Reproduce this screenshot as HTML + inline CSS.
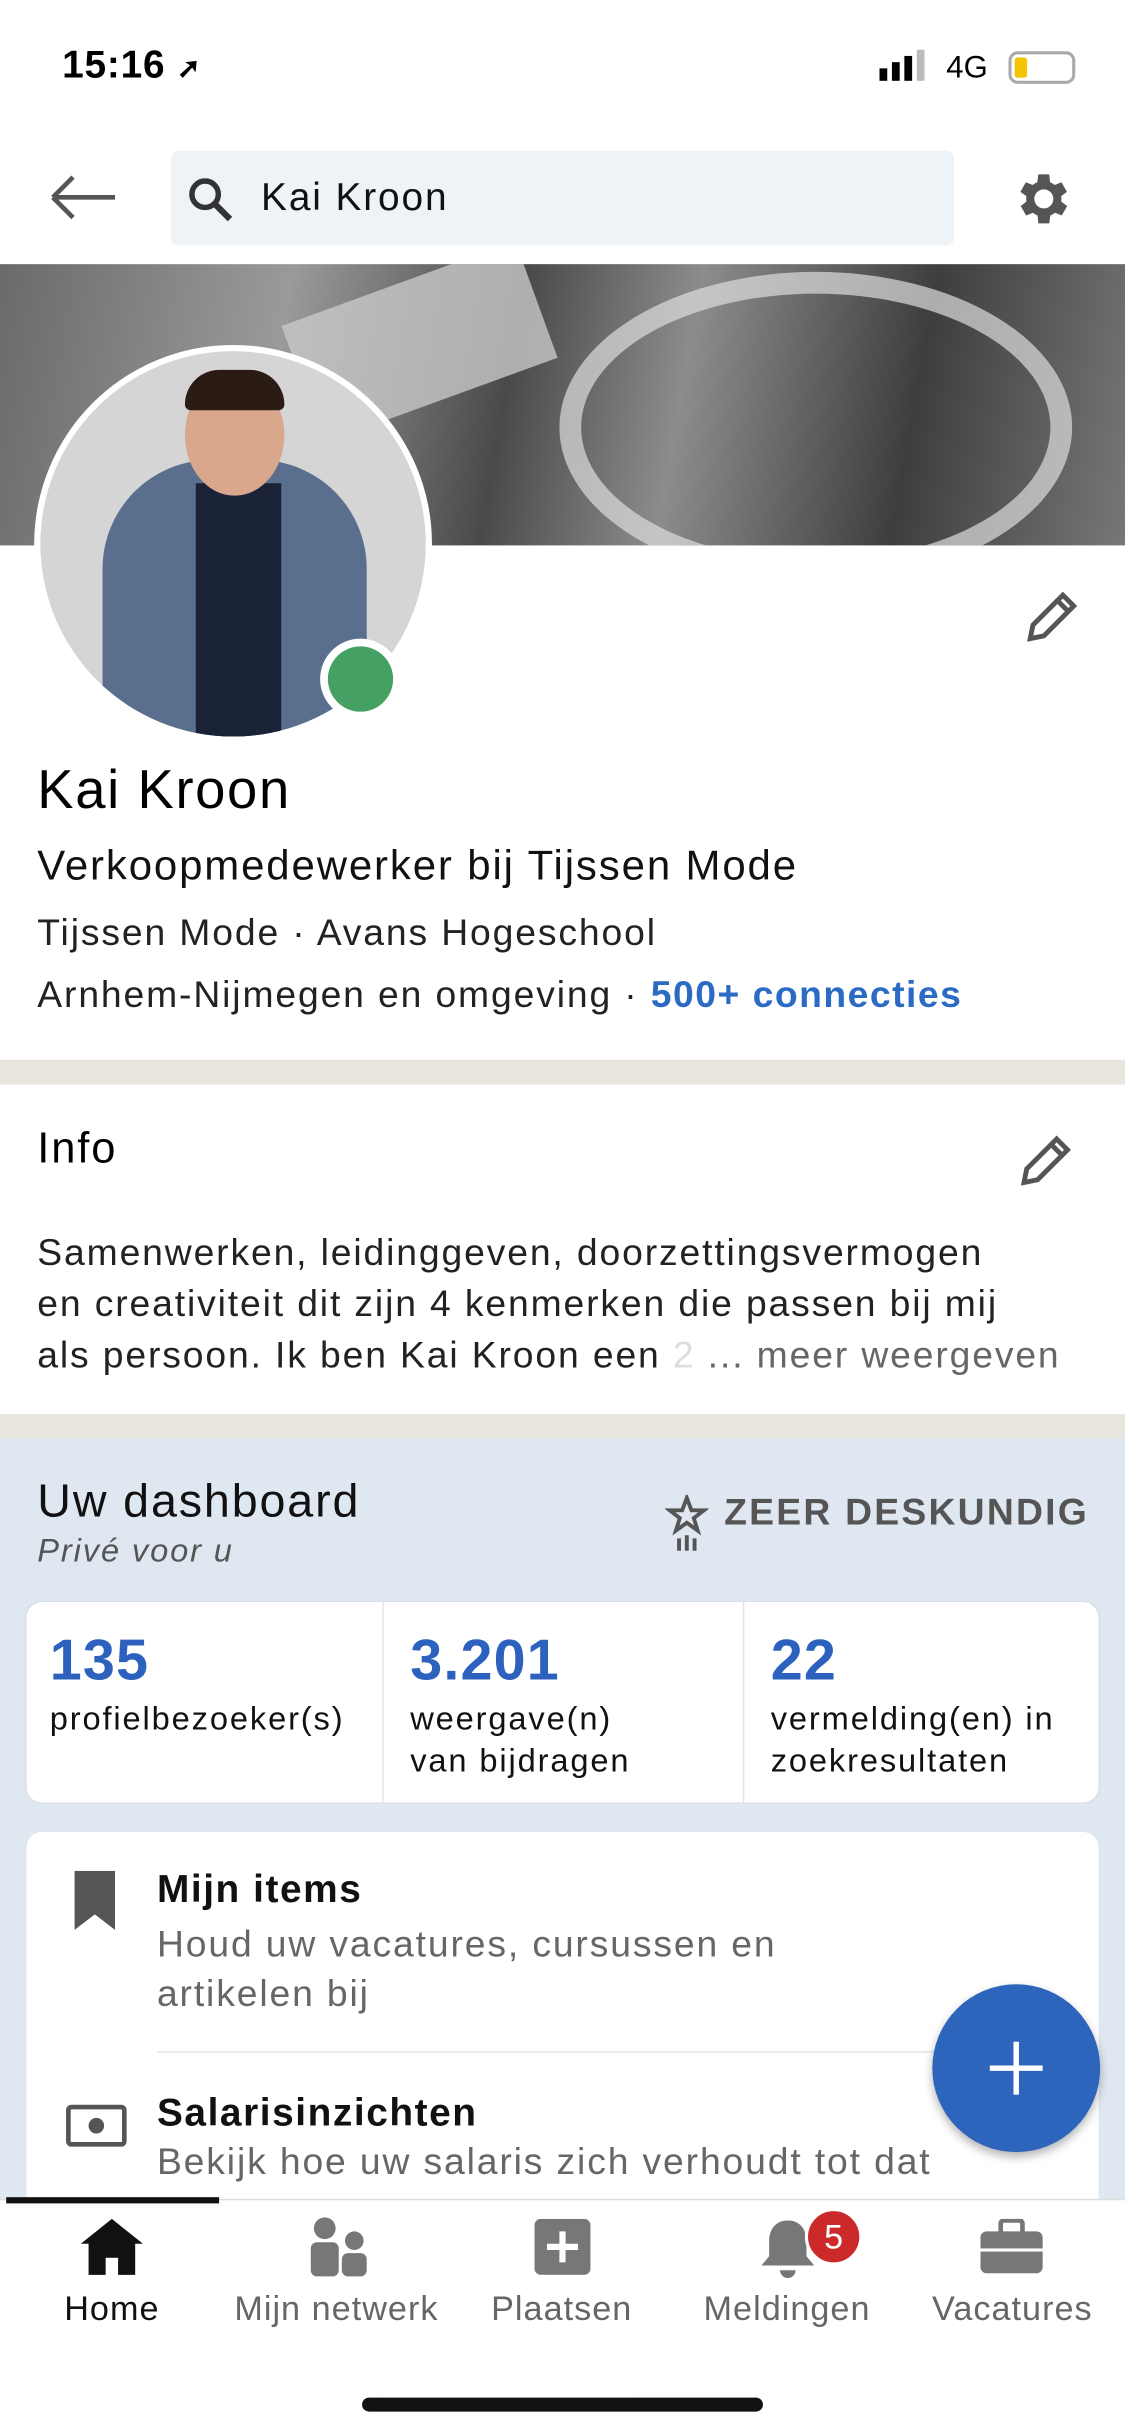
<!DOCTYPE html>
<html><head><meta charset="utf-8"><style>
*{margin:0;padding:0;box-sizing:border-box}
html,body{width:1125px;height:2436px;overflow:hidden;background:#fff}
#w{width:724px;height:1568px;transform:scale(1.55387);transform-origin:0 0;position:relative;font-family:"Liberation Sans",sans-serif;color:#000;background:#fff;letter-spacing:.075em}
.a{position:absolute}
.t{white-space:nowrap}
</style></head><body><div id="w">
<div class="a t" style="left:40px;top:28px;font-size:25px;font-weight:bold;letter-spacing:.02em">15:16 <span style="font-size:18px">➚</span></div>
<div class="a" style="left:566px;top:44px;width:5px;height:8px;background:#000"></div>
<div class="a" style="left:574px;top:40px;width:5px;height:12px;background:#000"></div>
<div class="a" style="left:582px;top:36px;width:5px;height:16px;background:#000"></div>
<div class="a" style="left:590px;top:32px;width:5px;height:20px;background:#bbb"></div>
<div class="a t" style="left:609px;top:33px;font-size:20px;letter-spacing:0">4G</div>
<div class="a" style="left:649px;top:33px;width:43px;height:21px;border:2px solid #aaa;border-radius:6px"><div style="margin:2px;width:8px;height:13px;background:#f5c400;border-radius:2px"></div></div>
<svg class="a" style="left:30px;top:110px" width="46" height="34"><path d="M4 17H44M4 17L17 4M4 17L17 30" stroke="#555" stroke-width="3" fill="none"/></svg>
<div class="a" style="left:110px;top:97px;width:504px;height:61px;background:#eef3f8;border-radius:5px"></div>
<svg class="a" style="left:120px;top:113px" width="32" height="32"><circle cx="12" cy="12" r="8.5" stroke="#333" stroke-width="3.5" fill="none"/><path d="M18 18L28 28" stroke="#333" stroke-width="4"/></svg>
<div class="a t" style="left:168px;top:113px;font-size:25px;color:#111">Kai Kroon</div>
<svg class="a" style="left:649px;top:107px" width="42" height="42" viewBox="0 0 24 24"><path fill="#555" d="M19.4 13a7.5 7.5 0 000-2l2.1-1.6-2-3.5-2.5 1a7 7 0 00-1.7-1L15 3h-4l-.4 2.9a7 7 0 00-1.7 1l-2.5-1-2 3.5L6.6 11a7.5 7.5 0 000 2l-2.1 1.6 2 3.5 2.5-1a7 7 0 001.7 1L11 21h4l.4-2.9a7 7 0 001.7-1l2.5 1 2-3.5zM13 15.5a3.5 3.5 0 110-7 3.5 3.5 0 010 7z"/></svg>
<div class="a" style="left:0;top:170px;width:724px;height:181px;overflow:hidden;background:linear-gradient(100deg,#6a6a6a,#9a9a9a 25%,#4a4a4a 45%,#8c8c8c 60%,#3e3e3e 80%,#777)">
<div class="a" style="left:360px;top:5px;width:330px;height:200px;border:14px solid #ddd;border-radius:50%;opacity:.7"></div>
<div class="a" style="left:190px;top:10px;width:160px;height:80px;background:#c8c8c8;transform:rotate(-20deg);opacity:.8"></div>
</div>
<div class="a" style="left:22px;top:222px;width:256px;height:256px;border-radius:50%;background:#fff"></div>
<div class="a" style="left:26px;top:226px;width:248px;height:248px;border-radius:50%;overflow:hidden;background:#d5d5d5">
<div class="a" style="left:40px;top:70px;width:170px;height:200px;border-radius:70px 70px 0 0;background:#5a6f8e"></div>
<div class="a" style="left:100px;top:85px;width:55px;height:180px;background:#1a2238"></div>
<div class="a" style="left:93px;top:15px;width:64px;height:78px;border-radius:50%;background:#d9a88c"></div>
<div class="a" style="left:93px;top:12px;width:64px;height:26px;border-radius:30px 30px 5px 5px;background:#2a1c14"></div>
</div>
<div class="a" style="left:206px;top:411px;width:52px;height:52px;border-radius:50%;background:#fff"></div>
<div class="a" style="left:211px;top:416px;width:42px;height:42px;border-radius:50%;background:#45a163"></div>
<svg class="a" style="left:656px;top:376px" width="42" height="42" viewBox="0 0 24 24"><path d="M4 20l1-5L16 4l4 4L9 19zM14 6l4 4" stroke="#555" stroke-width="1.8" fill="none"/></svg>
<div class="a t" style="left:24px;top:489px;font-size:35px;letter-spacing:.03em">Kai Kroon</div>
<div class="a t" style="left:24px;top:542px;font-size:27px;color:#111">Verkoopmedewerker bij Tijssen Mode</div>
<div class="a t" style="left:24px;top:587px;font-size:24px;color:#222">Tijssen Mode · Avans Hogeschool</div>
<div class="a t" style="left:24px;top:627px;font-size:24px;color:#222">Arnhem-Nijmegen en omgeving · <b style="color:#2c6bc4;letter-spacing:.04em">500+ connecties</b></div>
<div class="a" style="left:0;top:682px;width:724px;height:16px;background:#e9e6e0"></div>
<div class="a t" style="left:24px;top:723px;font-size:28px">Info</div>
<svg class="a" style="left:652px;top:726px" width="42" height="42" viewBox="0 0 24 24"><path d="M4 20l1-5L16 4l4 4L9 19zM14 6l4 4" stroke="#555" stroke-width="1.8" fill="none"/></svg>
<div class="a t" style="left:24px;top:790px;font-size:24px;line-height:33px;color:#222">Samenwerken, leidinggeven, doorzettingsvermogen<br>en creativiteit dit zijn 4 kenmerken die passen bij mij<br>als persoon. Ik ben Kai Kroon een <span style="color:#ddd">2</span> <span style="color:#666">... meer weergeven</span></div>
<div class="a" style="left:0;top:910px;width:724px;height:16px;background:#e9e6e0"></div>
<div class="a" style="left:0;top:926px;width:724px;height:490px;background:#dfe7f0"></div>
<div class="a t" style="left:24px;top:950px;font-size:30px;color:#111;letter-spacing:.04em">Uw dashboard</div>
<div class="a t" style="left:24px;top:987px;font-size:21px;color:#555;font-style:italic">Privé voor u</div>
<svg class="a" style="left:428px;top:962px" width="28" height="40" viewBox="0 0 28 40"><path d="M14 2l3 8h8l-6.5 5 2.5 8-7-5-7 5 2.5-8L3 10h8z" stroke="#555" stroke-width="2.5" fill="none"/><path d="M9 28v8M14 26v10M19 28v8" stroke="#555" stroke-width="2.5"/></svg>
<div class="a t" style="left:466px;top:960px;font-size:24px;font-weight:bold;color:#555;letter-spacing:.06em">ZEER DESKUNDIG</div>
<div class="a" style="left:17px;top:1031px;width:690px;height:129px;background:#fff;border-radius:10px;box-shadow:0 0 1px #ccc"></div>
<div class="a" style="left:246px;top:1031px;width:1px;height:129px;background:#e5e5e5"></div>
<div class="a" style="left:478px;top:1031px;width:1px;height:129px;background:#e5e5e5"></div>
<div class="a t" style="left:32px;top:1048px;font-size:37px;font-weight:bold;color:#2c62bd;letter-spacing:.02em">135</div>
<div class="a t" style="left:264px;top:1048px;font-size:37px;font-weight:bold;color:#2c62bd;letter-spacing:.02em">3.201</div>
<div class="a t" style="left:496px;top:1048px;font-size:37px;font-weight:bold;color:#2c62bd;letter-spacing:.02em">22</div>
<div class="a t" style="left:32px;top:1093px;font-size:21px;line-height:27px;color:#111">profielbezoeker(s)</div>
<div class="a t" style="left:264px;top:1093px;font-size:21px;line-height:27px;color:#111">weergave(n)<br>van bijdragen</div>
<div class="a t" style="left:496px;top:1093px;font-size:21px;line-height:27px;color:#111">vermelding(en) in<br>zoekresultaten</div>
<div class="a" style="left:17px;top:1179px;width:690px;height:260px;background:#fff;border-radius:10px"></div>
<svg class="a" style="left:46px;top:1204px" width="30" height="40"><path d="M2 0h26v38L15 28 2 38z" fill="#555"/></svg>
<div class="a t" style="left:101px;top:1202px;font-size:25px;font-weight:bold;color:#111;letter-spacing:.04em">Mijn items</div>
<div class="a t" style="left:101px;top:1236px;font-size:24px;line-height:32px;color:#666">Houd uw vacatures, cursussen en<br>artikelen bij</div>
<div class="a" style="left:101px;top:1320px;width:606px;height:1px;background:#e5e5e5"></div>
<svg class="a" style="left:42px;top:1354px" width="40" height="28"><rect x="2" y="2" width="36" height="24" rx="2" stroke="#555" stroke-width="3" fill="none"/><circle cx="20" cy="14" r="5" fill="#555"/></svg>
<div class="a t" style="left:101px;top:1346px;font-size:25px;font-weight:bold;color:#111;letter-spacing:.04em">Salarisinzichten</div>
<div class="a t" style="left:101px;top:1378px;font-size:24px;color:#666">Bekijk hoe uw salaris zich verhoudt tot dat</div>
<div class="a" style="left:600px;top:1277px;width:108px;height:108px;border-radius:50%;background:#2d64bc;box-shadow:0 3px 6px rgba(0,0,0,.3)"></div>
<svg class="a" style="left:634px;top:1311px" width="40" height="40"><path d="M20 3v34M3 20h34" stroke="#fff" stroke-width="3.5"/></svg>
<div class="a" style="left:0;top:1415px;width:724px;height:153px;background:#fff;border-top:1px solid #ddd"></div>
<div class="a" style="left:4px;top:1414px;width:137px;height:4px;background:#111"></div>
<svg class="a" style="left:50px;top:1426px" width="44" height="40" viewBox="0 0 44 40"><path d="M22 2L2 18h5v20h11V27h8v11h11V18h5z" fill="#111"/></svg>
<svg class="a" style="left:198px;top:1426px" width="40" height="40"><circle cx="11" cy="8" r="7" fill="#777"/><rect x="2" y="17" width="18" height="22" rx="4" fill="#777"/><circle cx="30" cy="16" r="6" fill="#777"/><rect x="22" y="24" width="16" height="15" rx="4" fill="#777"/></svg>
<svg class="a" style="left:344px;top:1428px" width="36" height="36"><rect width="36" height="36" rx="4" fill="#777"/><path d="M18 8v20M8 18h20" stroke="#fff" stroke-width="4"/></svg>
<svg class="a" style="left:487px;top:1426px" width="40" height="40"><path d="M20 3c-8 0-12 6-12 13v10l-5 6h34l-5-6V16c0-7-4-13-12-13zM15 35a5 5 0 0010 0z" fill="#777"/></svg>
<div class="a" style="left:518px;top:1421px;width:37px;height:37px;border-radius:50%;background:#cc2a2a;border:2px solid #fff;color:#fff;font-size:22px;text-align:center;line-height:33px;letter-spacing:0">5</div>
<svg class="a" style="left:630px;top:1428px" width="42" height="36"><rect x="14" y="1" width="14" height="9" rx="2" stroke="#777" stroke-width="3" fill="none"/><rect x="1" y="8" width="40" height="27" rx="4" fill="#777"/><rect x="1" y="19" width="40" height="2" fill="#fff"/></svg>
<div class="a t" style="left:0;top:1473px;width:144px;text-align:center;font-size:22px;color:#111;letter-spacing:.03em">Home</div>
<div class="a t" style="left:144px;top:1473px;width:145px;text-align:center;font-size:22px;color:#666;letter-spacing:.03em">Mijn netwerk</div>
<div class="a t" style="left:289px;top:1473px;width:145px;text-align:center;font-size:22px;color:#666;letter-spacing:.03em">Plaatsen</div>
<div class="a t" style="left:434px;top:1473px;width:145px;text-align:center;font-size:22px;color:#666;letter-spacing:.03em">Meldingen</div>
<div class="a t" style="left:579px;top:1473px;width:145px;text-align:center;font-size:22px;color:#666;letter-spacing:.03em">Vacatures</div>
<div class="a" style="left:233px;top:1543px;width:258px;height:9px;border-radius:5px;background:#111"></div>
</div></body></html>
